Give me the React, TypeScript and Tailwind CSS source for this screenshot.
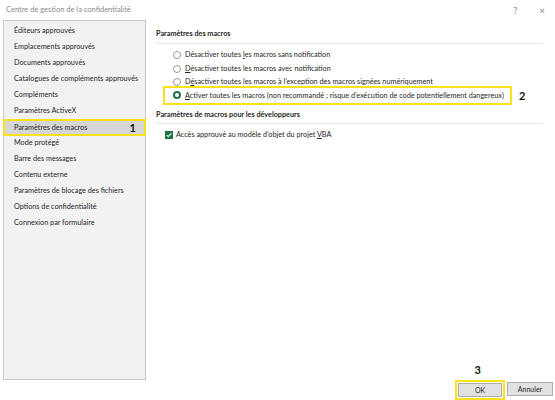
import React from 'react';

const font = { fontFamily: 'Lato, "Open Sans", sans-serif' };

const navItems = [
  'Éditeurs approuvés',
  'Emplacements approuvés',
  'Documents approuvés',
  'Catalogues de compléments approuvés',
  'Compléments',
  'Paramètres ActiveX',
  'Paramètres des macros',
  'Mode protégé',
  'Barre des messages',
  'Contenu externe',
  'Paramètres de blocage des fichiers',
  'Options de confidentialité',
  'Connexion par formulaire',
];

function Radio({ checked }: { checked?: boolean }) {
  if (checked) {
    return <span className="inline-block w-[8px] h-[8px] rounded-full border-[2px] border-[#217346] bg-white shrink-0" />;
  }
  return <span className="inline-block w-[8px] h-[8px] rounded-full border border-[#9a9a9a] bg-white shrink-0" />;
}

export default function App() {
  return (
    <div className="w-[555px] h-[400px] bg-white text-[#262626] overflow-hidden text-[7.25px] leading-none" style={font}>
      {/* Title bar */}
      <div className="h-[20px] flex items-center justify-between pl-[6px] pr-[10px] text-[#8a8a8a] text-[7.5px]">
        <span>Centre de gestion de la confidentialité</span>
        <div className="flex items-center gap-[22px] text-[9px]">
          <span>?</span>
          <span className="text-[10px]">×</span>
        </div>
      </div>

      <div className="flex">
        {/* Left nav */}
        <div className="ml-[3px] w-[143px] h-[360px] border border-[#c8c8c8] bg-[#f2f2f2] pt-[2px] flex flex-col">
          {navItems.map((item) =>
            item === 'Paramètres des macros' ? (
              <div
                key={item}
                className="h-[17px] -mx-px -mb-px flex items-center justify-between pl-[9px] pr-[8px] bg-[#d6d6d6] border-[2px] border-[#f8e21c]"
              >
                <span>{item}</span>
                <span className="text-[11px] font-bold text-[#111]">1</span>
              </div>
            ) : (
              <div key={item} className="h-[16px] flex items-center pl-[10px]">
                {item}
              </div>
            )
          )}
        </div>

        {/* Right content */}
        <div className="flex-1 pl-[10px] pr-[12px] h-[360px] flex flex-col">
          <div className="pt-[10px] font-bold text-[#262626]">Paramètres des macros</div>
          <div className="mt-[6px] border-t border-[#e6e6e6]" />
          <div className="pl-[17px] pt-[4px] flex flex-col">
            <div className="h-[13.5px] flex items-center gap-[4px]">
              <Radio />
              <span>Désactiver toutes <u>l</u>es macros sans notification</span>
            </div>
            <div className="h-[13.5px] flex items-center gap-[4px]">
              <Radio />
              <span><u>D</u>ésactiver toutes les macros avec notification</span>
            </div>
            <div className="h-[13.5px] flex items-center gap-[4px]">
              <Radio />
              <span>D<u>é</u>sactiver toutes les macros à l’exception des macros signées numériquement</span>
            </div>
            <div className="flex items-center -mt-[3px] -mb-[1px]">
              <div className="-ml-[10px] h-[19px] w-[349px] border-[2px] border-[#f8e21c] flex items-center gap-[4px] pl-[8px] whitespace-nowrap">
                <Radio checked />
                <span><u>A</u>ctiver toutes les macros (non recommandé ; risque d’exécution de code potentiellement dangereux)</span>
              </div>
              <span className="ml-[7px] text-[11px] font-bold text-[#111]">2</span>
            </div>
          </div>
          <div className="pt-[7px] font-bold">Paramètres de macros pour les développeurs</div>
          <div className="mt-[5px] border-t border-[#e6e6e6]" />
          <div className="pl-[9px] pt-[7px] flex items-center gap-[3px]">
            <span className="w-[8px] h-[8px] bg-[#217346] flex items-center justify-center shrink-0">
              <svg viewBox="0 0 8 8" className="w-[8px] h-[8px]">
                <path d="M1.6 4.2 L3.2 5.6 L6.4 2.4" stroke="white" strokeWidth="1.1" fill="none" />
              </svg>
            </span>
            <span>Accès approuvé au modèle d’objet du projet <u>V</u>BA</span>
          </div>
          <div className="mt-auto flex justify-end pr-[62px] pb-[5px]">
            <span className="text-[11px] font-bold text-[#111]">3</span>
          </div>
        </div>
      </div>

      {/* Buttons */}
      <div className="flex justify-end items-start gap-[2px] pr-[2px]">
        <div className="border-[2px] border-[#f8e21c] p-[1px]">
          <button className="w-[44px] h-[14px] bg-[#e1e1e1] border border-[#adadad] flex items-center justify-center text-[7px]">OK</button>
        </div>
        <button className="mt-[2px] w-[46px] h-[14px] bg-[#e1e1e1] border border-[#adadad] flex items-center justify-center text-[7px]">Annuler</button>
      </div>
    </div>
  );
}
